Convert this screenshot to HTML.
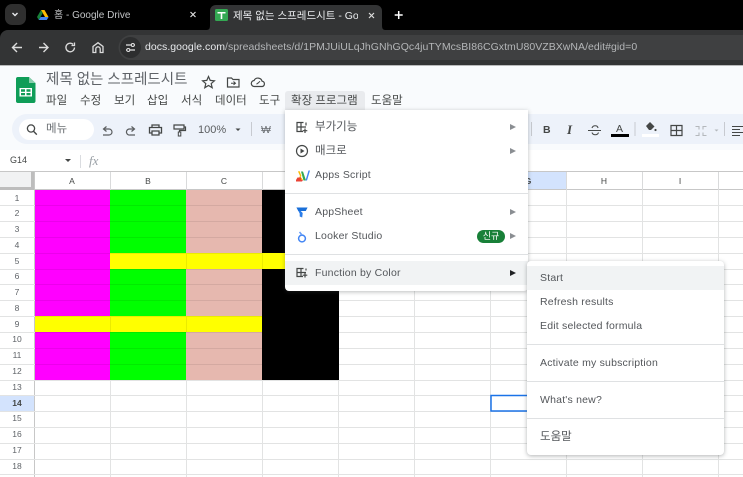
<!DOCTYPE html>
<html><head><meta charset="utf-8">
<style>
html,body{margin:0;padding:0;background:#fff}
body{width:743px;height:477px;overflow:hidden;position:relative;font-family:"Liberation Sans","Noto Sans CJK KR",sans-serif}
.a{position:absolute;white-space:nowrap}
svg{position:absolute;overflow:visible}
.m{font-size:11.5px;color:#444746;top:94px;line-height:14px}
.i{font-size:10.5px;color:#53565a;line-height:14px;letter-spacing:.2px}
.k{font-size:11.5px;letter-spacing:0;margin-top:1px}
.ar{position:absolute;width:0;height:0;border-left:6px solid #8a8e92;border-top:3px solid transparent;border-bottom:3px solid transparent}
.sep{position:absolute;height:1px;background:#dfe1e3}
</style></head><body>

<!-- chrome -->
<div class="a" style="left:0;top:0;width:743px;height:65px;background:#000"></div>
<div class="a" style="left:0;top:30px;width:743px;height:35px;background:#333435;border-radius:8px 0 0 0"></div>
<div class="a" style="left:5px;top:4px;width:21px;height:21px;border-radius:7px;background:#2f2f2f"></div>
<svg style="left:0;top:0" width="743" height="65" viewBox="0 0 743 65">
 <path d="M12.500 13l2.500 2.500 2.500-2.500" fill="none" stroke="#e8eaed" stroke-width="1.400"/>
 <path d="M41 10l3.500 0 4 7-3.500 0z" fill="#fbbc04"/><path d="M41 10l-4 7 1.800 3 4-7z" fill="#188038"/><path d="M38.800 20l8 0 1.800-3-8 0z" fill="#4285f4"/>
 <path d="M190.500 12l5 5M195.500 12l-5 5" stroke="#ddd" stroke-width="1.200"/>
 <path d="M206 30c3 0 4-1 4-5V11c0-4 3-6 6-6h160c3 0 6 2 6 6v14c0 4 1 5 4 5z" fill="#333435"/>
 <rect x="215" y="9" width="13" height="12" rx="1.500" fill="#34a853"/>
 <path d="M217.500 12h8v1.500h-3.200V19h-1.600v-5.500h-3.200z" fill="#fff"/>
 <path d="M369 13l5 5M374 13l-5 5" stroke="#ddd" stroke-width="1.200"/>
 <path d="M398.700 11v8M394.700 15h8" stroke="#fff" stroke-width="1.500"/>
 <path d="M22 47.500h-9M17 43l-4.500 4.500L17 52" fill="none" stroke="#dcdcdc" stroke-width="1.400"/>
 <path d="M39 47.500h9M43.500 43l4.500 4.500-4.500 4.500" fill="none" stroke="#dcdcdc" stroke-width="1.400"/>
 <path d="M74.500 47.500a4.300 4.300 0 1 1-1.300-3.100M74.500 42.500v3h-3" fill="none" stroke="#dcdcdc" stroke-width="1.300"/>
 <path d="M93 52.500v-6l5-3.800 5 3.800v6h-2.800v-3.500a2.200 2.200 0 0 0-4.400 0v3.500z" fill="none" stroke="#dcdcdc" stroke-width="1.300"/>
 <path d="M131 35H743V60H131a12.500 12.500 0 0 1 0-25z" fill="#3f4041"/>
 <circle cx="130.500" cy="47.500" r="10.500" fill="#2d2e2f"/>
 <path d="M126 45h5M134 45h1M126 50h1M130 50h5" stroke="#e3e3e3" stroke-width="1.300"/><circle cx="132.800" cy="45" r="1.500" fill="none" stroke="#e3e3e3"/><circle cx="128.300" cy="50" r="1.500" fill="none" stroke="#e3e3e3"/>
</svg>
<div class="a" style="left:145px;top:40px;font-size:10.500px;line-height:15px;color:#b4b6b8;letter-spacing:.04px"><span style="color:#e8eaed">docs.google.com</span>/spreadsheets/d/1PMJUiULqJhGNhGQc4juTYMcsBI86CGxtmU80VZBXwNA/edit#gid=0</div>
<div class="a" style="left:54px;top:9px;font-size:10px;line-height:14px;color:#c3c5c7">홈 - Google Drive</div>
<div class="a" style="left:233px;top:9px;width:125px;overflow:hidden;font-size:10.500px;line-height:14px;color:#eceef0">제목 없는 스프레드시트 - Google</div>

<!-- sheets header -->
<div class="a" style="left:0;top:65px;width:743px;height:107px;background:#f9fbfd"></div>
<div class="a" style="left:0;top:65px;width:743px;height:1px;background:#b9babb"></div>
<svg style="left:16px;top:77px" width="20" height="26" viewBox="0 0 20 26">
 <path d="M2 0h11l6.500 6v18a1.800 1.800 0 0 1-2 2H2a1.800 1.800 0 0 1-2-2V2a1.800 1.800 0 0 1 2-2z" fill="#0f9d58"/>
 <path d="M13 0l6.500 6H13z" fill="#87ceac"/>
 <path d="M3.500 11h12.500v8.500H3.500zM5 12.300v2.400h4v-2.400zm5.500 0v2.400h4v-2.400zM5 16v2.200h4V16zm5.500 0v2.200h4V16z" fill="#fff" fill-rule="evenodd"/>
</svg>
<div class="a" style="left:46px;top:71px;font-size:14.500px;line-height:19px;color:#5f6368">제목 없는 스프레드시트</div>
<svg style="left:200px;top:74px" width="70" height="16" viewBox="0 0 70 16">
 <path d="M8.500 2.500l1.700 3.900 4.200.4-3.200 2.800 1 4.100-3.700-2.200-3.700 2.200 1-4.100L2.600 6.800l4.200-.4z" fill="none" stroke="#444746" stroke-width="1.200"/>
 <path d="M27.500 4h4l1.500 1.500h6v7.500h-11.500z" fill="none" stroke="#444746" stroke-width="1.200"/><path d="M31 9.200h4.500M33.500 7.500l2 1.700-2 1.700" fill="none" stroke="#444746"/>
 <path d="M54.500 12.500a3 3 0 0 1-.4-6 4.300 4.300 0 0 1 8 .7 2.700 2.700 0 0 1 .2 5.300z" fill="none" stroke="#444746" stroke-width="1.200"/><path d="M56.500 10.200l2-1.500 1.500-1.500" fill="none" stroke="#444746"/>
</svg>
<div class="a m" style="left:46px">파일</div>
<div class="a m" style="left:80px">수정</div>
<div class="a m" style="left:114px">보기</div>
<div class="a m" style="left:147px">삽입</div>
<div class="a m" style="left:181px">서식</div>
<div class="a m" style="left:215px">데이터</div>
<div class="a m" style="left:259px">도구</div>
<div class="a" style="left:285px;top:91px;width:80px;height:19px;background:#e9ebee;border-radius:3px 3px 0 0"></div>
<div class="a m" style="left:291px">확장 프로그램</div>
<div class="a m" style="left:371px">도움말</div>

<!-- toolbar -->
<div class="a" style="left:12px;top:114px;width:745px;height:30px;background:#edf2fa;border-radius:15px 0 0 15px"></div>
<div class="a" style="left:19px;top:119px;width:75px;height:21px;background:#fff;border-radius:11px"></div>
<div class="a" style="left:46px;top:122px;font-size:11.500px;line-height:14px;color:#6b6f73">메뉴</div>
<div class="a" style="left:198px;top:123px;font-size:11px;line-height:14px;color:#5a5d5f">100%</div>
<div class="a" style="left:261px;top:123px;font-size:10.500px;line-height:14px;color:#6b6f73">₩</div>
<div class="a" style="left:543px;top:123px;font-size:10.500px;font-weight:bold;line-height:14px;color:#444746">B</div>
<div class="a" style="left:567px;top:122px;font-family:'Liberation Serif',serif;font-style:italic;font-weight:bold;font-size:13px;line-height:15px;color:#444746">I</div>
<div class="a" style="left:616px;top:122px;font-size:10.500px;line-height:14px;color:#444746">A</div>
<svg style="left:0;top:110px" width="743" height="40" viewBox="0 0 743 40">
 <circle cx="31" cy="18.500" r="3.600" fill="none" stroke="#444746" stroke-width="1.300"/><path d="M33.500 21.300l3.300 3.300" stroke="#444746" stroke-width="1.400"/>
 <path d="M103 25h6a3 3 0 0 0 0-6h-5M106.500 16.500l-3 2.500 3 2.500" fill="none" stroke="#5a5d5f" stroke-width="1.200"/>
 <path d="M135 25h-5a3 3 0 0 1-1-6h5M131.500 16.500l3 2.500-3 2.500" fill="none" stroke="#5a5d5f" stroke-width="1.200"/>
 <path d="M152 18v-3h7v3M152 23h-2.500v-5.500h12V23H159M152 21h7v4h-7z" fill="none" stroke="#444746" stroke-width="1.300"/>
 <path d="M174 15h10v4h-10zM184 17h1.500v3.500H179.500V22" fill="none" stroke="#444746" stroke-width="1.200"/><rect x="178.300" y="22" width="2.500" height="4" fill="none" stroke="#444746"/>
 <path d="M235.500 18.500h5l-2.500 2.500z" fill="#444746"/>
 <path d="M251.500 12v14" stroke="#c7cad0"/><path d="M531.500 12v14M635 12v14M724.500 12v14" stroke="#c7cad0"/>
 <path d="M588 20.500h13M592 18c1-3 5.500-3 6 0M592 22.500c1 3 5.500 3 6.500 0" fill="none" stroke="#444746" stroke-width="1.100"/>
 <rect x="611" y="24" width="18" height="3" fill="#000"/>
 <path d="M646 16l4-4 4.500 4.500-3.500 3.500h-2z" fill="#444746"/><circle cx="655.500" cy="20" r="1.100" fill="#444746"/><rect x="642" y="24" width="17" height="3" fill="#fff"/>
 <path d="M671 15.500h11v10h-11zM676.500 15.500v10M671 20.500h11" fill="none" stroke="#444746" stroke-width="1.200"/>
 <path d="M695.500 16.500h3.500v3M695.500 25.500h3.500v-3M706.500 16.500H703v3M706.500 25.500H703v-3" fill="none" stroke="#b4b8bc" stroke-width="1.100"/>
 <path d="M714.500 19.500l4 0-2 2z" fill="#b4b8bc"/>
 <path d="M732 16.500h11M732 19.500h8M732 22.500h11M732 25.500h8" stroke="#444746" stroke-width="1.100"/>
</svg>

<!-- formula bar -->
<div class="a" style="left:0;top:150px;width:743px;height:22px;background:#fff"></div>
<div class="a" style="left:10px;top:154px;font-size:9px;line-height:13px;color:#444746">G14</div>
<div class="a" style="left:64.500px;top:159px;width:0;height:0;border-top:3px solid #444746;border-left:3.500px solid transparent;border-right:3.500px solid transparent"></div>
<div class="a" style="left:80px;top:155px;width:1px;height:13px;background:#dadce0"></div>
<div class="a" style="left:89px;top:154px;font-family:'Liberation Serif',serif;font-style:italic;font-size:13px;line-height:14px;color:#9aa0a6">fx</div>

<!-- grid -->
<svg style="left:0;top:170px" width="743" height="307" viewBox="0 170 743 307" font-family="Liberation Sans, Noto Sans CJK KR, sans-serif">
 <rect x="0" y="172" width="743" height="305" fill="#fff"/>
 <rect x="0" y="172" width="35" height="18" fill="#f1f2f3"/>
 <rect x="490" y="172" width="76" height="18" fill="#d3e3fd"/>
 <rect x="0" y="395.500" width="34" height="15.800" fill="#d3e3fd"/>
 <path d="M0 171.500H743M34.500 172V477M0 189.500H743" stroke="#c7c7c7" stroke-width="1" fill="none"/>
 <path d="M32.500 172v18M0 188.500h34" stroke="#bdbdbd" stroke-width="3"/>
 <g stroke="#d9dadb" stroke-width="1">
  <path d="M110.500 172V190M186.500 172V190M262.500 172V190M338.500 172V190M414.500 172V190M490.500 172V190M566.500 172V190M642.500 172V190M718.500 172V190"/>
 </g>
 <g stroke="#e2e3e3" stroke-width="1">
  <path d="M110.500 190V477M186.500 190V477M262.500 190V477M338.500 190V477M414.500 190V477M490.500 190V477M566.500 190V477M642.500 190V477M718.500 190V477"/>
  <path d="M0 205.500H743M0 221.500H743M0 237.500H743M0 253.500H743M0 269.500H743M0 284.500H743M0 300.500H743M0 316.500H743M0 332.500H743M0 348.500H743M0 364.500H743M0 380.500H743M0 395.500H743M0 411.500H743M0 427.500H743M0 443.500H743M0 459.500H743M0 474.500H743"/>
 </g>
 <rect x="35" y="190" width="75" height="190" fill="#f0f"/>
 <rect x="110" y="190" width="76" height="190" fill="#0f0"/>
 <rect x="186" y="190" width="76" height="190" fill="#e6b8af"/>
 <rect x="262" y="190" width="77" height="190" fill="#000"/>
 <rect x="110" y="253" width="229" height="16" fill="#ff0"/>
 <rect x="35" y="316" width="227" height="16" fill="#ff0"/>
 <rect x="262" y="316" width="77" height="16" fill="#000"/>
 <path d="M35 205.500H262M35 221.500H262M35 237.500H262M35 253.500H262M35 269.500H262M35 284.500H262M35 300.500H262M35 316.500H262M35 332.500H262M35 348.500H262M35 364.500H262M186.500 253V269M262.500 253V269M110.500 316V332M186.500 316V332" stroke="#000" stroke-opacity=".08" fill="none"/>
 <g font-size="8.500" fill="#444746" text-anchor="middle">
  <text x="72" y="184">A</text><text x="148" y="184">B</text><text x="224" y="184">C</text><text x="528" y="184" font-weight="bold">G</text><text x="604" y="184">H</text><text x="680" y="184">I</text>
 </g>
 <g font-size="8.500" fill="#5f6368" text-anchor="middle">
  <text x="17" y="201">1</text><text x="17" y="216">2</text><text x="17" y="232">3</text><text x="17" y="248">4</text><text x="17" y="264">5</text><text x="17" y="279">6</text><text x="17" y="295">7</text><text x="17" y="311">8</text><text x="17" y="327">9</text><text x="17" y="342">10</text><text x="17" y="358">11</text><text x="17" y="374">12</text><text x="17" y="390">13</text><text x="17" y="406" font-weight="bold" fill="#444746">14</text><text x="17" y="421">15</text><text x="17" y="437">16</text><text x="17" y="453">17</text><text x="17" y="469">18</text>
 </g>
 <rect x="491" y="395.500" width="75" height="15.500" fill="none" stroke="#1a73e8" stroke-width="1.500"/>
</svg>

<!-- main menu -->
<div class="a" style="left:285px;top:110px;width:243px;height:181px;background:#fff;border-radius:0 0 4px 4px;box-shadow:0 1px 4px rgba(60,64,67,.35)"></div>
<div class="a i k" style="left:315px;top:119px">부가기능</div>
<div class="a i k" style="left:315px;top:143px">매크로</div>
<div class="a i" style="left:315px;top:168px">Apps Script</div>
<div class="sep" style="left:285px;top:193px;width:243px"></div>
<div class="a i" style="left:315px;top:205px">AppSheet</div>
<div class="a i" style="left:315px;top:229px">Looker Studio</div>
<div class="a" style="left:477px;top:230px;width:28px;height:13px;border-radius:6.500px;background:#188038;color:#fff;font-size:9px;line-height:12px;text-align:center;overflow:hidden">신규</div>
<div class="sep" style="left:285px;top:254px;width:243px"></div>
<div class="a" style="left:285px;top:261px;width:243px;height:24px;background:#f1f3f4"></div>
<div class="a i" style="left:315px;top:266px">Function by Color</div>
<div class="ar" style="left:510px;top:124px"></div>
<div class="ar" style="left:510px;top:148px"></div>
<div class="ar" style="left:510px;top:209px"></div>
<div class="ar" style="left:510px;top:233px"></div>
<div class="ar" style="left:510px;top:270px;border-left-color:#202124"></div>
<svg style="left:285px;top:110px" width="70" height="175" viewBox="0 0 70 175">
 <g fill="none" stroke="#444746" stroke-width="1.200">
  <path d="M18.500 12.500h-6.500v9h6M12 17h9M16 12.500v9M21 12.500v3"/>
  <circle cx="17" cy="41" r="5.500"/>
  <path d="M18.500 158.500h-6.500v8h6M12 162.500h9M16 158.500v8M21 158.500v2"/>
 </g>
 <path d="M20 18.500v4.500M17.700 20.700h4.600M20 163v4.500M17.700 165.200h4.600" stroke="#444746" stroke-width="1.200"/>
 <path d="M15.500 38.500v5l4-2.500z" fill="#444746"/>
 <path d="M13 70l2-4 3 4z" fill="#f9ab00"/><path d="M11 70h5v-2.500h-3.500z" fill="#ea4335"/><path d="M11 70h7l-1 1.500h-6z" fill="#ea4335"/>
 <path d="M16 61.500l2.500 9h2.500l-3-9z" fill="#34a853"/><path d="M23.500 60.500l-3 10h1.500l3-10z" fill="#4285f4"/><path d="M14.500 61l2 5-1 1-2.500-5.500z" fill="#fbbc04"/>
 <path d="M11.500 97.500h11l-1.800 3.500h-5l2 2-.5 4.500-2.500-1v-3z" fill="#2b7de9"/>
 <path d="M11.500 97.500h11l-1.800 3.500h-7.400z" fill="#1a6fd8"/>
 <circle cx="17" cy="128.500" r="3.400" fill="none" stroke="#4285f4" stroke-width="1.500"/>
 <path d="M14.500 122l2.500 3" stroke="#669df6" stroke-width="1.500"/>
</svg>

<!-- submenu -->
<div class="a" style="left:527px;top:261px;width:197px;height:194px;background:#fff;border-radius:4px;box-shadow:0 1px 4px rgba(60,64,67,.4)"></div>
<div class="a" style="left:527px;top:266px;width:197px;height:24px;background:#f1f3f4"></div>
<div class="a i" style="left:540px;top:271px">Start</div>
<div class="a i" style="left:540px;top:295px">Refresh results</div>
<div class="a i" style="left:540px;top:319px">Edit selected formula</div>
<div class="sep" style="left:527px;top:344px;width:197px"></div>
<div class="a i" style="left:540px;top:356px">Activate my subscription</div>
<div class="sep" style="left:527px;top:381px;width:197px"></div>
<div class="a i" style="left:540px;top:393px">What's new?</div>
<div class="sep" style="left:527px;top:418px;width:197px"></div>
<div class="a i k" style="left:540px;top:429px">도움말</div>
</body></html>
